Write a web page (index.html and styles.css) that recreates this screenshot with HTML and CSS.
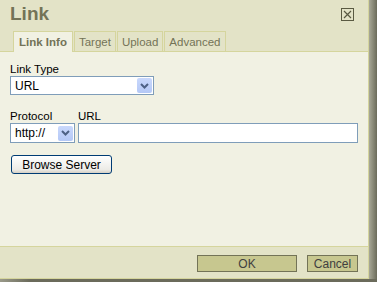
FILE: index.html
```html
<!DOCTYPE html>
<html>
<head>
    <title>Link</title>
    <link rel="stylesheet" href="styles.css">
</head>
<body>
    <div class="frame">
        <div class="dialog">
            <div class="title-bar">
                <div class="title">Link</div>
                <div class="close-btn">
                    <svg width="13" height="13" viewBox="0 0 13 13">
                        <rect x="0.5" y="0.5" width="12" height="12" fill="none" stroke="#5a5a42"/>
                        <path d="M3 3 L10 10 M10 3 L3 10" stroke="#5a5a42" stroke-width="1.2"/>
                    </svg>
                </div>
            </div>
            <div class="tabs">
                <div class="tab active">Link Info</div>
                <div class="tab">Target</div>
                <div class="tab">Upload</div>
                <div class="tab">Advanced</div>
            </div>
            <div class="content">
                <label class="field-label">Link Type</label>
                <div class="select wide">
                    <span>URL</span>
                    <span class="arrow"><svg width="9" height="6" viewBox="0 0 9 6"><path d="M1 1 L4.5 4.5 L8 1" fill="none" stroke="#4d6185" stroke-width="2"/></svg></span>
                </div>
                <div class="url-row">
                    <div class="col">
                        <label class="field-label">Protocol</label>
                        <div class="select small">
                            <span>http://</span>
                            <span class="arrow"><svg width="9" height="6" viewBox="0 0 9 6"><path d="M1 1 L4.5 4.5 L8 1" fill="none" stroke="#4d6185" stroke-width="2"/></svg></span>
                        </div>
                    </div>
                    <div class="col grow">
                        <label class="field-label">URL</label>
                        <div class="text-input"></div>
                    </div>
                </div>
                <button class="browse">Browse Server</button>
            </div>
            <div class="footer">
                <button class="btn ok">OK</button>
                <button class="btn cancel">Cancel</button>
            </div>
        </div>
        <div class="shadow-right"></div>
    </div>
    <div class="shadow-bottom"></div>
</body>
</html>
```

FILE: styles.css
```css
body {
    margin: 0;
    width: 377px;
    height: 282px;
    overflow: hidden;
    font-family: "Liberation Sans", Arial, sans-serif;
    font-size: 11px;
    background-color: #6b6b5b;
}

.frame {
    display: flex;
    flex-direction: row;
}

.dialog {
    width: 368px;
    height: 278px;
    background-color: #e3e3c7;
    border-right: 1px solid #d5d59d;
    border-bottom: 1px solid #d5d59d;
    display: flex;
    flex-direction: column;
}

.shadow-right {
    width: 8px;
    height: 279px;
    background: linear-gradient(to right, #a8a898, #8a8a78, #6b6b5b);
}

.shadow-bottom {
    height: 3px;
    background: linear-gradient(to right, #9a9a8a, #6b6b5b 30px);
}

.title-bar {
    display: flex;
    flex-direction: row;
    justify-content: space-between;
    align-items: flex-start;
    height: 31px;
}

.title {
    font-family: "Liberation Sans", Arial, sans-serif;
    font-weight: bold;
    font-size: 19px;
    line-height: 22px;
    color: #737357;
    padding: 3px 0 0 10px;
}

.close-btn {
    padding: 8px 14px 0 0;
    line-height: 0;
}

.tabs {
    display: flex;
    flex-direction: row;
    padding-left: 13px;
    border-bottom: 1px solid #d5d59d;
    height: 20px;
}

.tab {
    border: 1px solid #d5d59d;
    border-bottom: none;
    margin-right: 1px;
    padding: 3px 4px 0 4px;
    color: #737357;
    font-size: 11.5px;
    line-height: 14px;
    background-color: #e3e3c7;
}

.tab.active {
    background-color: #f1f1e3;
    font-weight: bold;
    height: 21px;
    margin-bottom: -1px;
    padding: 3px 5px 0 5px;
}

.content {
    flex: 1;
    background-color: #f1f1e3;
    padding: 11px 10px 0 10px;
    border-bottom: 1px solid #d5d59d;
}

.field-label {
    display: block;
    color: #000;
    font-size: 11.5px;
    line-height: 13px;
}

.select {
    display: flex;
    flex-direction: row;
    justify-content: space-between;
    align-items: center;
    background-color: #fff;
    border: 1px solid #7f9db9;
    height: 19px;
    box-sizing: border-box;
    padding: 0 1px 0 4px;
    font-size: 12px;
}

.select.wide {
    width: 144px;
}

.select.small {
    width: 65px;
    height: 20px;
}

.arrow {
    display: flex;
    align-items: center;
    justify-content: center;
    width: 15px;
    height: 15px;
    background: linear-gradient(#c9d8fc, #b4c8f6);
    border-radius: 2px;
}

.url-row {
    display: flex;
    flex-direction: row;
    gap: 3px;
    margin-top: 15px;
}

.col.grow {
    flex: 1;
}

.text-input {
    height: 20px;
    box-sizing: border-box;
    border: 1px solid #7f9db9;
    background-color: #fff;
}

.browse {
    display: block;
    margin: 12px 0 0 1px;
    width: 101px;
    height: 19px;
    padding: 0;
    font-family: "Liberation Sans", Arial, sans-serif;
    font-size: 12px;
    color: #000;
    border: 1px solid #003c74;
    border-radius: 3px;
    background: linear-gradient(#ffffff, #ecebe6 80%, #d6d0c5);
}

.footer {
    display: flex;
    flex-direction: row;
    justify-content: flex-end;
    gap: 10px;
    padding: 8px 10px 0 0;
    height: 23px;
}

.btn {
    height: 17px;
    padding: 0;
    background-color: #c7c78f;
    border: 1px solid #737357;
    font-family: "Liberation Sans", Arial, sans-serif;
    font-size: 12px;
    color: #404040;
}

.btn.ok {
    width: 100px;
}

.btn.cancel {
    width: 51px;
}
```
